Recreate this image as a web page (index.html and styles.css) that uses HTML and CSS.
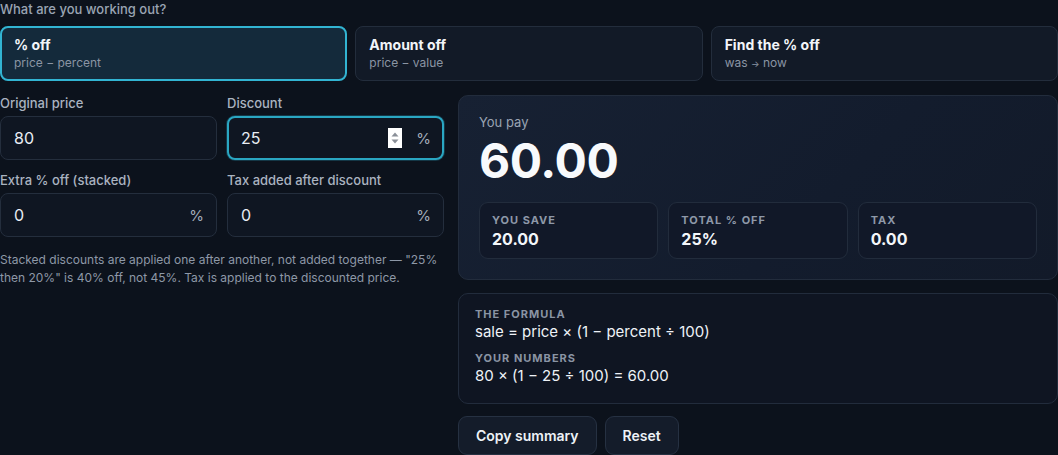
FILE: index.html
```html
<!DOCTYPE html>
<html>
<head>
<meta charset="utf-8">
<link rel="stylesheet" href="styles.css">
</head>
<body>
<div class="app">
  <div class="mode-label">What are you working out?</div>
  <div class="modes">
    <div class="mode active"><div class="mode-title">% off</div><div class="mode-sub">price − percent</div></div>
    <div class="mode"><div class="mode-title">Amount off</div><div class="mode-sub">price − value</div></div>
    <div class="mode"><div class="mode-title">Find the % off</div><div class="mode-sub">was <span class="arrow">→</span> now</div></div>
  </div>
  <div class="main">
    <div class="inputs">
      <div class="grid">
        <div class="field">
          <div class="flabel">Original price</div>
          <div class="input"><span class="val">80</span></div>
        </div>
        <div class="field">
          <div class="flabel">Discount</div>
          <div class="input focus"><span class="val">25</span><span class="spin"><svg width="14" height="20" viewBox="0 0 14 20"><rect width="14" height="20" fill="#ffffff"/><path d="M3.5 8.5 L7 4.5 L10.5 8.5 Z" fill="#8a8f98"/><path d="M3.5 11.5 L7 15.5 L10.5 11.5 Z" fill="#8a8f98"/></svg></span><span class="unit">%</span></div>
        </div>
        <div class="field">
          <div class="flabel">Extra % off (stacked)</div>
          <div class="input"><span class="val">0</span><span class="unit">%</span></div>
        </div>
        <div class="field">
          <div class="flabel">Tax added after discount</div>
          <div class="input"><span class="val">0</span><span class="unit">%</span></div>
        </div>
      </div>
      <p class="note">Stacked discounts are applied one after another, not added together — "25% then 20%" is 40% off, not 45%. Tax is applied to the discounted price.</p>
    </div>
    <div class="results">
      <div class="card result">
        <div class="pay-label">You pay</div>
        <div class="pay">60.00</div>
        <div class="stats">
          <div class="stat"><div class="stat-label">YOU SAVE</div><div class="stat-val">20.00</div></div>
          <div class="stat"><div class="stat-label">TOTAL % OFF</div><div class="stat-val">25%</div></div>
          <div class="stat"><div class="stat-label">TAX</div><div class="stat-val">0.00</div></div>
        </div>
      </div>
      <div class="card formula">
        <div class="f-label">THE FORMULA</div>
        <div class="f-text">sale = price × (1 − percent ÷ 100)</div>
        <div class="f-label second">YOUR NUMBERS</div>
        <div class="f-text">80 × (1 − 25 ÷ 100) = 60.00</div>
      </div>
      <div class="buttons">
        <button class="btn">Copy summary</button>
        <button class="btn">Reset</button>
      </div>
    </div>
  </div>
</div>
</body>
</html>
```
FILE: styles.css
```css
* { box-sizing: border-box; }
html, body { margin: 0; padding: 0; }
body {
  background: #0c121c;
  font-family: Inter, "Noto Sans", sans-serif;
  color: #e8edf4;
  width: 1058px;
  height: 455px;
  overflow: hidden;
}
.app { padding: 0; }
.mode-label {
  font-size: 13px;
  font-weight: 500;
  color: #9aa4b3;
  line-height: 18px;
}
.modes {
  display: grid;
  grid-template-columns: repeat(3, 1fr);
  gap: 8px;
  margin-top: 8px;
}
.mode {
  height: 55px;
  border: 1px solid #232d3c;
  border-radius: 8px;
  background: #121a27;
  padding: 9px 13px;
}
.mode.active {
  border: 2px solid #32b4d2;
  background: #142a3b;
  padding: 8px 12px;
}
.mode-title { font-size: 14px; font-weight: 700; color: #f2f5f9; line-height: 18px; }
.mode-sub { font-size: 12px; color: #8b95a4; line-height: 16px; margin-top: 1px; }
.arrow { font-size: 9px; }
.main {
  display: grid;
  grid-template-columns: 444px 1fr;
  gap: 14px;
  margin-top: 14px;
}
.inputs { padding-top: 0; }
.grid {
  display: grid;
  grid-template-columns: 1fr 1fr;
  column-gap: 10px;
  row-gap: 12px;
}
.flabel {
  font-size: 13px;
  font-weight: 500;
  color: #aab3c0;
  line-height: 16px;
  margin-bottom: 5px;
}
.input {
  height: 44px;
  border: 1px solid #242e3d;
  border-radius: 8px;
  background: #0f1622;
  display: flex;
  align-items: center;
  padding: 0 12px 0 13px;
  font-size: 16px;
  color: #e8edf4;
}
.input.focus {
  border: 2px solid #2aa6c2;
  padding: 0 11px 0 12px;
  box-shadow: 0 0 0 1px rgba(42,166,194,0.25);
}
.val { flex: 1; }
.spin { display: flex; margin-right: 14px; }
.unit { font-size: 15px; color: #a3acb9; }
.note {
  margin: 14px 0 0;
  font-size: 12px;
  line-height: 17.5px;
  color: #8e98a7;
}
.results { display: flex; flex-direction: column; }
.card {
  border: 1px solid #222c3c;
  border-radius: 10px;
  background: #131b2b;
}
.result {
  height: 185px;
  padding: 18px 20px 18px 20px;
  background: linear-gradient(135deg, #172133 0%, #131c2d 60%, #121a29 100%);
}
.pay-label { font-size: 13px; color: #9aa4b3; line-height: 16px; }
.pay {
  font-size: 48px;
  font-weight: 700;
  color: #f8fafc;
  line-height: 54px;
  margin-top: 4px;
  letter-spacing: -0.4px;
}
.stats {
  display: grid;
  grid-template-columns: repeat(3, 1fr);
  gap: 10px;
  margin-top: 14px;
}
.stat {
  height: 57px;
  border: 1px solid #222c3c;
  border-radius: 9px;
  background: #111828;
  padding: 10px 12px;
}
.stat-label {
  font-size: 11px;
  font-weight: 700;
  letter-spacing: 1px;
  color: #8e98a8;
  line-height: 14px;
}
.stat-val { font-size: 16px; font-weight: 700; color: #f3f6fa; line-height: 20px; margin-top: 2px; }
.formula {
  margin-top: 13px;
  height: 111px;
  padding: 14px 16px;
  background: #0f1522;
}
.f-label {
  font-size: 11px;
  font-weight: 700;
  letter-spacing: 1px;
  color: #8a94a4;
  line-height: 13px;
}
.f-label.second { margin-top: 10px; }
.f-text { font-size: 15px; color: #eef2f7; line-height: 20px; margin-top: 1px; }
.buttons { display: flex; gap: 8px; margin-top: 12px; }
.btn {
  height: 39px;
  border: 1px solid #263142;
  border-radius: 9px;
  background: #141c2a;
  color: #eef2f7;
  font-family: Inter, "Noto Sans", sans-serif;
  font-size: 14px;
  font-weight: 600;
  padding: 0 17px;
}
```
